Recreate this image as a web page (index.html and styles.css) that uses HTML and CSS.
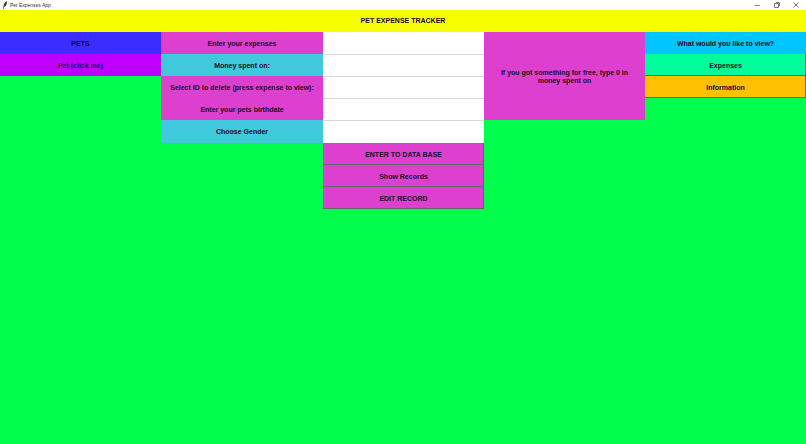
FILE: index.html
```html
<!DOCTYPE html>
<html lang="en">
<head>
<meta charset="utf-8">
<title>Pet Expenses App</title>
<link rel="stylesheet" href="styles.css">
</head>
<body>
<div class="titlebar">
  <div class="app-name">
    <svg class="feather" width="6" height="8" viewBox="0 0 6 8"><path d="M5 0C3 1 1.500 3 1.500 5.500L1 8h.6l.5-2C4 5.500 5 3 5 0z" fill="#333"/></svg>
    <span>Pet Expenses App</span>
  </div>
  <div class="win-controls">
    <svg width="8" height="8" viewBox="0 0 8 8"><path d="M1 4.500h5" stroke="#888" fill="none"/></svg>
    <svg width="8" height="8" viewBox="0 0 8 8"><path d="M1.500 2.500h4v4h-4zM3 2.500V1.500h3.500v3.500H5.500" stroke="#777" fill="none"/></svg>
    <svg width="8" height="8" viewBox="0 0 8 8"><path d="M1.500 1.500l5 5M6.500 1.500l-5 5" stroke="#777" fill="none"/></svg>
  </div>
</div>
<header class="banner">PET EXPENSE TRACKER</header>
<main class="board">
  <section class="col">
    <div class="cell blue">PETS</div>
    <div class="cell purple">Pet (click me)</div>
  </section>
  <section class="col">
    <div class="cell magenta">Enter your expenses</div>
    <div class="cell teal">Money spent on:</div>
    <div class="cell magenta">Select ID to delete (press expense to view):</div>
    <div class="cell magenta">Enter your pets birthdate</div>
    <div class="cell teal last">Choose Gender</div>
  </section>
  <section class="col">
    <div class="field"></div>
    <div class="field"></div>
    <div class="field"></div>
    <div class="field"></div>
    <div class="field last"></div>
    <div class="cell magenta raised">ENTER TO DATA BASE</div>
    <div class="cell magenta raised">Show Records</div>
    <div class="cell magenta raised">EDIT RECORD</div>
  </section>
  <section class="col">
    <div class="note">If you got something for free, type 0 in money spent on</div>
  </section>
  <section class="col">
    <div class="cell sky">What would you like to view?</div>
    <div class="cell mint raised">Expenses</div>
    <div class="cell orange raised">Information</div>
  </section>
</main>
</body>
</html>
```
FILE: styles.css
```css
html, body {
  margin: 0;
  padding: 0;
  height: 100%;
  overflow: hidden;
}
body {
  display: flex;
  flex-direction: column;
  background: #00ff4c;
  font-family: "Liberation Sans", Arial, sans-serif;
  font-size: 7px;
  font-weight: bold;
  color: #1a0a24;
}
.titlebar {
  height: 10px;
  flex: none;
  background: #fff;
  display: flex;
  justify-content: space-between;
  align-items: center;
  font-weight: normal;
  font-size: 5px;
  color: #333;
}
.app-name {
  display: flex;
  align-items: center;
  gap: 2px;
  padding-left: 2px;
}
.win-controls {
  display: flex;
  gap: 11px;
  padding-right: 6px;
}
.banner {
  height: 22px;
  flex: none;
  background: #f5ff00;
  display: flex;
  align-items: center;
  justify-content: center;
  padding-bottom: 1px;
  box-sizing: border-box;
}
.board {
  display: grid;
  grid-template-columns: 161px 162px 161px 161px 161px;
  flex: 1;
  align-items: start;
}
.col {
  display: flex;
  flex-direction: column;
}
.cell {
  height: 22px;
  box-sizing: border-box;
  display: flex;
  align-items: center;
  justify-content: center;
  text-align: center;
}
.cell.last {
  height: 23px;
}
.raised {
  box-shadow: inset -1px -1px 0 #666;
}
.field {
  height: 22px;
  box-sizing: border-box;
  background: #fff;
  border-top: 1px solid #d8d8d8;
}
.field:first-child {
  border-top: 0;
}
.field.last {
  height: 23px;
}
.note {
  height: 88px;
  background: #dd40cf;
  box-sizing: border-box;
  padding: 37px 12px 0;
  text-align: center;
  line-height: 8px;
}
.blue { background: #3b2dff; }
.purple { background: #c000ff; }
.magenta { background: #dd40cf; }
.teal { background: #40c8dc; }
.sky { background: #00c5ff; }
.mint { background: #00ff9c; }
.orange { background: #ffc000; }
```
